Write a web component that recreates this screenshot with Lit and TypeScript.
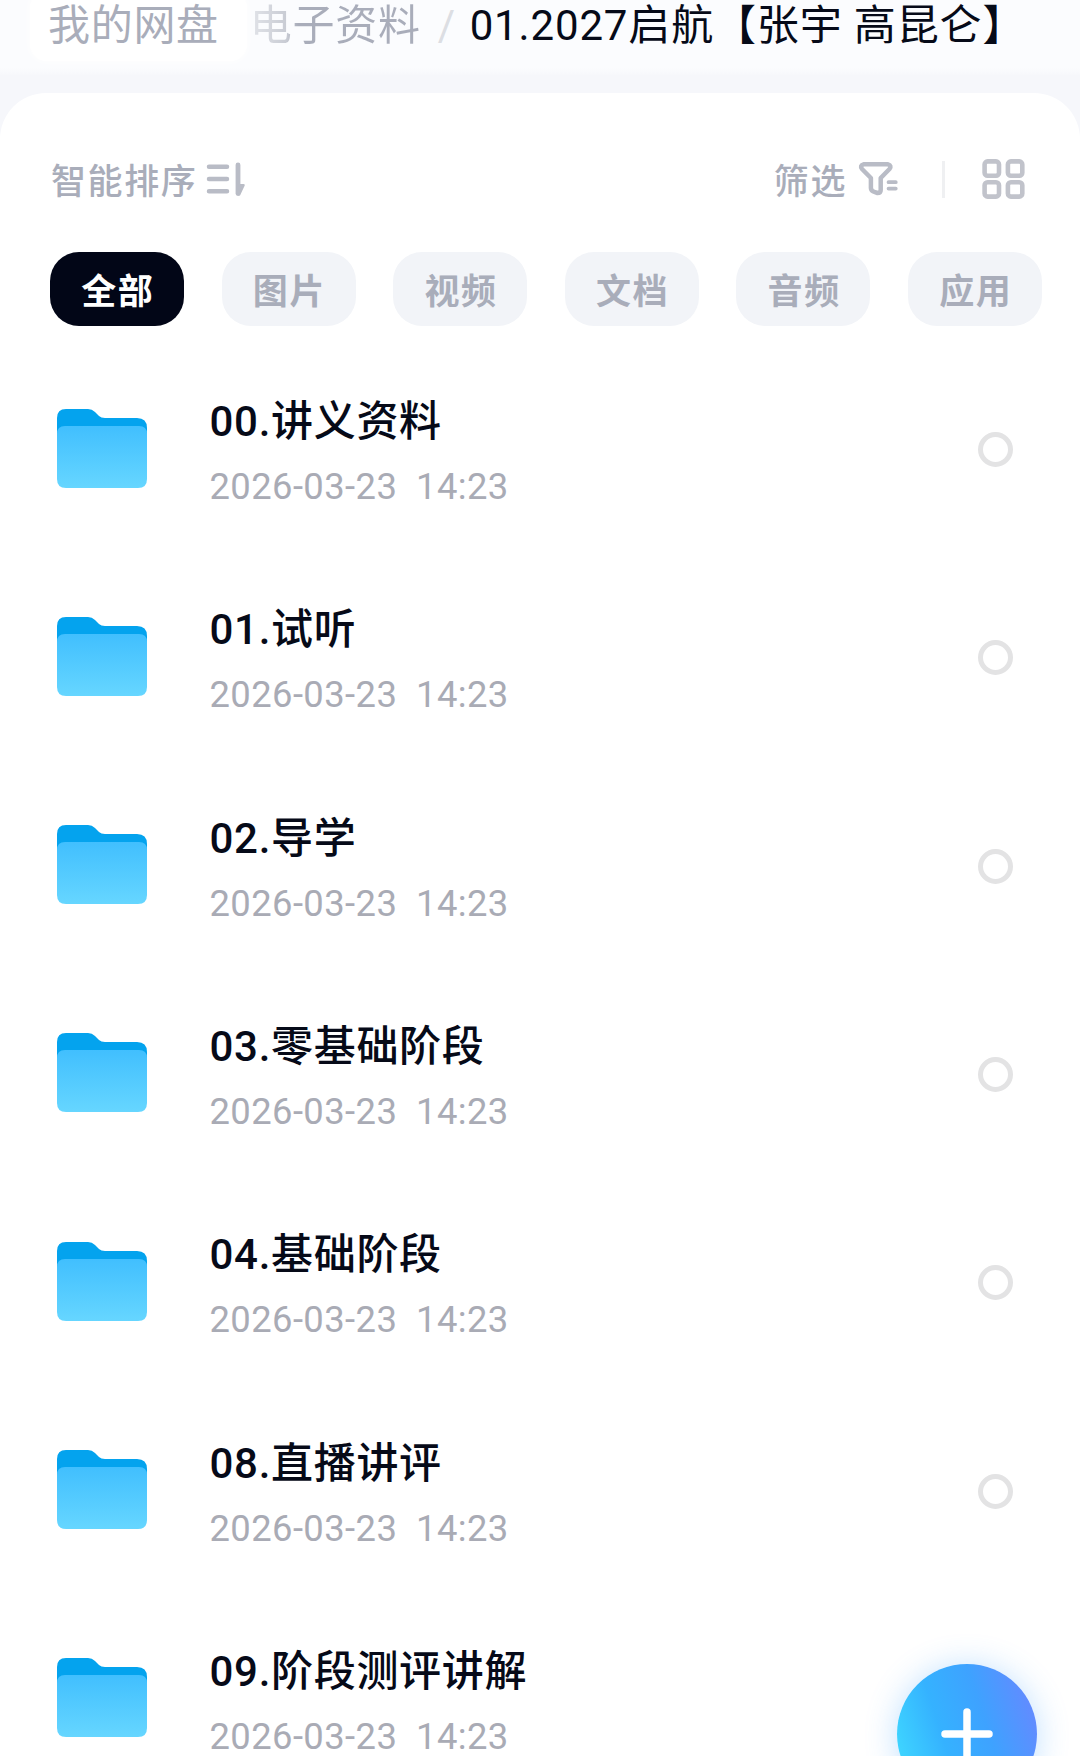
import { LitElement, html, css, svg } from "lit";
import { customElement, property } from "lit/decorators.js";
import { classMap } from "lit/directives/class-map.js";

const FOLDERS = [
  "00.讲义资料",
  "01.试听",
  "02.导学",
  "03.零基础阶段",
  "04.基础阶段",
  "08.直播讲评",
  "09.阶段测评讲解",
];
const FILTERS = ["全部", "图片", "视频", "文档", "音频", "应用"];

@customElement("folder-row")
class FolderRow extends LitElement {
  @property() name = "";
  @property() time = "";

  static styles = css`
    :host {
      display: flex;
      align-items: flex-start;
      height: 208.333px;
      padding: 0 66px 0 57px;
      box-sizing: border-box;
    }
    .folder {
      width: 90px;
      height: 79px;
      margin-top: 28.5px;
      flex: none;
    }
    .info {
      flex: 1;
      margin-left: 62.5px;
      padding-top: 17px;
    }
    .name,
    .time {
      white-space: pre;
    }
    .name {
      font-size: 42px;
      line-height: 50px;
      font-weight: 500;
      letter-spacing: 0.7px;
      color: #060a18;
    }
    .time {
      margin-top: 18px;
      font-size: 36.4px;
      line-height: 44px;
      letter-spacing: 0.4px;
      color: #a9abb5;
    }
    .check {
      flex: none;
      box-sizing: border-box;
      width: 35px;
      height: 35px;
      margin-top: 52px;
      border: 5px solid #e3e3e4;
      border-radius: 50%;
      margin-right: 1px;
    }
  `;

  render() {
    return html`
      <svg class="folder" viewBox="0 0 90 79">
        <defs>
          <linearGradient id="front" x1="0" y1="0" x2="0" y2="1">
            <stop offset="0" stop-color="#41bffe" />
            <stop offset="1" stop-color="#66d6ff" />
          </linearGradient>
        </defs>
        <path
          d="M0 9Q0 0 9 0H31Q35 0 38 3L42 7Q44 9 48 9H80Q90 9 90 19V40H0Z"
          fill="#04a3ee"
        />
        <path
          d="M0 25Q0 17 8 17H82Q90 17 90 25V70Q90 79 81 79H9Q0 79 0 70Z"
          fill="url(#front)"
        />
      </svg>
      <div class="info">
        <div class="name">${this.name}</div>
        <div class="time">${this.time}</div>
      </div>
      <div class="check"></div>
    `;
  }
}

@customElement("app-root")
class AppRoot extends LitElement {
  static styles = css`
    :host {
      display: block;
      position: relative;
      width: 1080px;
      height: 1756px;
      overflow: hidden;
      background: #f6f7fb;
      font-family: Roboto, "Noto Sans CJK SC", sans-serif;
    }
    .crumbs {
      display: flex;
      align-items: center;
      height: 93px;
      box-sizing: border-box;
      padding: 0 0 41px 48px;
      background: linear-gradient(#fbfcfe 0 68px, #f6f7fb 76px);
      font-size: 42px;
      line-height: 50px;
      letter-spacing: 0.7px;
      color: #a9adba;
      white-space: pre;
    }
    .root {
      margin: -10px 0 -10px -18px;
      padding: 10px 28px 10px 18px;
      border-radius: 16px;
      background: #fff;
      box-shadow: 0 0 8px #fff;
    }
    .parent {
      margin-left: 3px;
      background: linear-gradient(90deg, #e2e4e9, #c9ccd4 36px, #a9adba 48px);
      background-clip: text;
      color: transparent;
    }
    .slash {
      margin: 0 14px 0 17px;
      color: #dcdee3;
    }
    .current {
      letter-spacing: 0.85px;
      color: #060a18;
    }
    .sheet {
      height: 1663px;
      border-radius: 46px 46px 0 0;
      background: #fff;
      overflow: hidden;
    }
    .tools {
      display: flex;
      align-items: center;
      height: 44px;
      padding: 64px 55px 0 51px;
      font-size: 35px;
      font-weight: 500;
      letter-spacing: 1.6px;
      color: #a9adba;
    }
    .tools svg {
      flex: none;
    }
    .label {
      padding-bottom: 1px;
    }
    .sort {
      margin-left: 8px;
    }
    .filter {
      margin-left: 11px;
    }
    .spacer {
      flex: 1;
    }
    .divider {
      width: 3px;
      height: 37px;
      margin: 0 37px 0 44px;
      background: #eff0f2;
    }
    .chips {
      display: flex;
      gap: 37.6px;
      margin-top: 51px;
      padding-left: 50px;
    }
    .chip {
      flex: none;
      display: flex;
      align-items: center;
      justify-content: center;
      width: 134px;
      height: 74px;
      padding: 0 0 2px 1.6px;
      box-sizing: border-box;
      border-radius: 29px;
      background: #f2f4f8;
      color: #a9adba;
      font-size: 35px;
      font-weight: 700;
      letter-spacing: 1.6px;
    }
    .chip.active {
      background: #020617;
      color: #fff;
    }
    .list {
      display: flex;
      flex-direction: column;
      margin-top: 54px;
    }
    folder-row {
      flex: none;
    }
    .fab {
      position: absolute;
      left: 897px;
      top: 1664px;
      width: 140px;
      height: 140px;
      border-radius: 50%;
      background: linear-gradient(72deg, #40dcff 4%, #35b2ff 36%, #3ea2ff 62%, #5f8dff 88%, #6a88ff);
      box-shadow: 0 2px 32px rgba(60, 160, 255, 0.32);
    }
  `;

  render() {
    return html`
      <nav class="crumbs"><span class="root">我的网盘</span><span class="parent">电子资料</span
        ><span class="slash">/</span
        ><span class="current">01.2027启航【张宇 高昆仑】</span></nav>
      <main class="sheet">
        <div class="tools">
          <span class="label">智能排序</span>
          <svg class="sort" width="40" height="36" viewBox="0 0 40 36">
            <path
              d="M4 5.700H22M4 18H22M4 30.300H22"
              fill="none"
              stroke="#b9bcc6"
              stroke-width="4.500"
              stroke-linecap="round"
            />
            <path
              d="M33 4V32.500"
              stroke="#b9bcc6"
              stroke-width="4.800"
              stroke-linecap="round"
            />
            <path d="M34 23H38.500Q40.300 23 39.500 25L35 34.500H33Z" fill="#b9bcc6" />
          </svg>
          <span class="spacer"></span>
          <span class="label">筛选</span>
          <svg class="filter" width="40" height="36" viewBox="0 0 40 36">
            <path
              d="M5.500 3.300H30Q34 4.500 31.500 8L22.700 17V29Q22.700 32 19.500 32L17 31.200Q12.900 30 12.900 27V17L4 8Q1.500 4.500 5.500 3.300Z"
              fill="none"
              stroke="#b9bcc6"
              stroke-width="4.500"
              stroke-linejoin="round"
            />
            <path
              d="M30.500 21.200H37.800M30.500 27.600H37.800"
              stroke="#b9bcc6"
              stroke-width="3.700"
              stroke-linecap="round"
            />
          </svg>
          <span class="divider"></span>
          <svg width="43" height="40" viewBox="0 0 43 40">
            ${[0, 23.3].map((x) =>
              [0, 20.8].map(
                (y) => svg`<rect x=${x + 2.6} y=${y + 2.4} width="14.400" height="14.400"
                  rx="3" fill="none" stroke="#c1c3cb" stroke-width="4.600"/>`
              )
            )}
          </svg>
        </div>
        <div class="chips">
          ${FILTERS.map(
            (f, i) =>
              html`<span class=${classMap({ chip: true, active: i === 0 })}>${f}</span>`
          )}
          <span class="chip"></span>
        </div>
        <div class="list">
          ${FOLDERS.map(
            (f) => html`<folder-row .name=${f} .time=${"2026-03-23  14:23"}></folder-row>`
          )}
        </div>
      </main>
      <svg class="fab" viewBox="0 0 140 140">
        <path
          d="M70 48V92M48 70H92"
          stroke="#fff"
          stroke-width="7.500"
          stroke-linecap="round"
        />
      </svg>
    `;
  }
}
